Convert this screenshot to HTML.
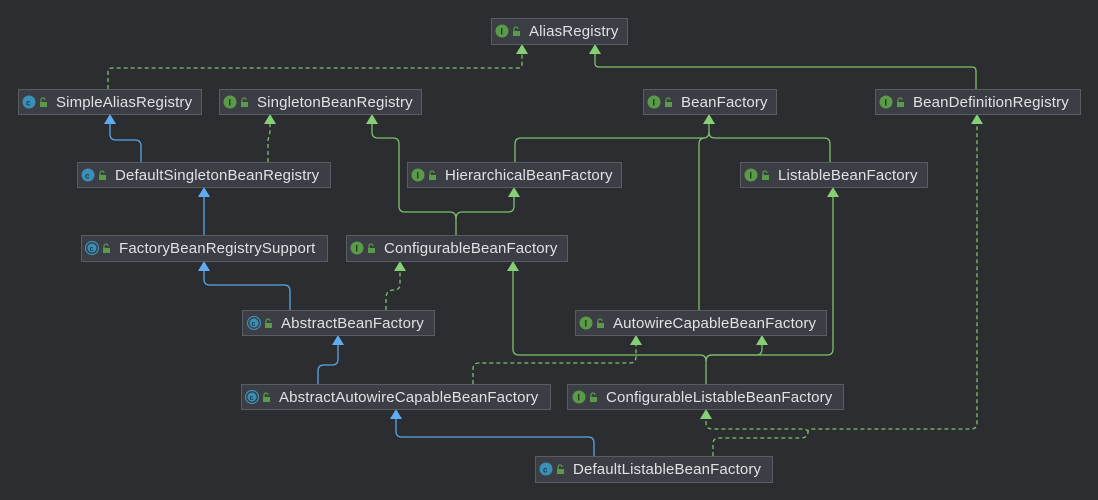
<!DOCTYPE html>
<html><head><meta charset="utf-8"><style>
html,body{margin:0;padding:0;background:#2b2d31;}
svg{display:block}
text{font-family:"Liberation Sans",sans-serif;font-size:15px;fill:#dfe1e5;letter-spacing:0.15px}
.b{fill:#3b3e44;stroke:#595c63;stroke-width:1}
.g{fill:none;stroke:#7cc16a;stroke-width:1.3}
.gd{fill:none;stroke:#7cc16a;stroke-width:1.3;stroke-dasharray:4 3}
.bl{fill:none;stroke:#5aa4e6;stroke-width:1.3}
.ag{fill:#86cf74}.ab{fill:#5fadf0}
</style></head><body>
<svg width="1098" height="500" viewBox="0 0 1098 500">
<defs>
<g id="ic"><circle cx="0" cy="0" r="6.5" fill="#5a9a48"/><text x="-1.5" y="3.5" style="font-size:9px;fill:#1e3a16;font-weight:bold">I</text></g>
<g id="cc"><circle cx="0" cy="0" r="6.5" fill="#3a90b8"/><text x="-3" y="3.5" style="font-size:8px;fill:#1a3a4a;font-weight:bold">c</text></g>
<g id="ac"><circle cx="0" cy="0" r="6.5" fill="none" stroke="#3a90b8" stroke-width="1.2"/><circle cx="0" cy="0" r="4.5" fill="#3a90b8"/><text x="-2.5" y="3" style="font-size:7px;fill:#1a3a4a;font-weight:bold">c</text></g>
<g id="lk"><rect x="-3" y="-1" width="7" height="5" fill="#5a9a48"/><path d="M-2 -1 v-2 a2 2 0 0 1 4 0" fill="none" stroke="#5a9a48" stroke-width="1.2"/></g>
</defs>

<path class="gd" d="M108 89 V72 Q108 68 112 68 H518 Q522 68 522 64 V50"/>
<path class="g" d="M976 89 V71 Q976 67 972 67 H599 Q595 67 595 63 V50"/>
<path class="bl" d="M141 162 V146 Q141 140 135 140 H116 Q110 140 110 134 V120"/>
<path class="gd" d="M268 162 V140 L270 132 V120"/>
<path class="bl" d="M204 235 V193"/>
<path class="bl" d="M290 310 V291 Q290 285 284 285 H210 Q204 285 204 279 V267"/>
<path class="gd" d="M386 310 V298 Q386 290 394 290 Q400 290 400 284 V267"/>
<path class="g" d="M456 235 V219 Q456 212 450 212 H405 Q399 212 399 206 V144 Q399 138 393 138 H378 Q372 138 372 132 V120"/>
<path class="g" d="M456 219 Q456 212 462 212 H508 Q514 212 514 206 V193"/>
<path class="g" d="M515 162 V144 Q515 138 521 138 H703 Q709 138 709 132 V120"/>
<path class="g" d="M830 162 V144 Q830 138 824 138 H715 Q709 138 709 132"/>
<path class="g" d="M699 310 V144 Q699 138 705 138"/>
<path class="bl" d="M318 384 V371 Q318 365 324 365 H332 Q338 365 338 359 V341"/>
<path class="gd" d="M473 384 V369 Q473 363 479 363 H630 Q636 363 636 357 V341"/>
<path class="g" d="M706 384 V361 Q706 355 700 355 H519 Q513 355 513 349 V267"/>
<path class="g" d="M706 361 Q706 355 712 355 H756 Q762 355 762 349 V341"/>
<path class="g" d="M706 361 Q706 355 712 355 H827 Q833 355 833 349 V193"/>
<path class="bl" d="M594 456 V443 Q594 437 588 437 H402 Q396 437 396 431 V415"/>
<path class="gd" d="M713 456 V444 Q713 438 719 438 H800 Q808 438 808 432 Q808 429 812 429 H971 Q977 429 977 423 V120"/>
<path class="gd" d="M808 432 Q808 429 802 429 H712 Q706 429 706 423 V415"/>

<g class="ag">
<path d="M522 44 l-6 10 h12z"/><path d="M595 44 l-6 10 h12z"/>
<path d="M270 114 l-6 10 h12z"/><path d="M372 114 l-6 10 h12z"/>
<path d="M709 114 l-6 10 h12z"/><path d="M977 114 l-6 10 h12z"/>
<path d="M514 187 l-6 10 h12z"/><path d="M833 187 l-6 10 h12z"/>
<path d="M400 261 l-6 10 h12z"/><path d="M513 261 l-6 10 h12z"/>
<path d="M636 335 l-6 10 h12z"/><path d="M762 335 l-6 10 h12z"/>
<path d="M706 409 l-6 10 h12z"/>
</g>
<g class="ab">
<path d="M110 114 l-6 10 h12z"/><path d="M204 187 l-6 10 h12z"/>
<path d="M204 261 l-6 10 h12z"/><path d="M338 335 l-6 10 h12z"/>
<path d="M396 409 l-6 10 h12z"/>
</g>

<g>
<rect class="b" x="491.5" y="18.5" width="136" height="26"/><use href="#ic" x="502" y="31"/><use href="#lk" x="516" y="32"/><text x="529" y="36">AliasRegistry</text>
<rect class="b" x="18.5" y="89.5" width="183" height="25"/><use href="#cc" x="29" y="102"/><use href="#lk" x="43" y="103"/><text x="56" y="107">SimpleAliasRegistry</text>
<rect class="b" x="219.5" y="89.5" width="202" height="25"/><use href="#ic" x="230" y="102"/><use href="#lk" x="244" y="103"/><text x="257" y="107">SingletonBeanRegistry</text>
<rect class="b" x="643.5" y="89.5" width="133" height="25"/><use href="#ic" x="654" y="102"/><use href="#lk" x="668" y="103"/><text x="681" y="107">BeanFactory</text>
<rect class="b" x="875.5" y="89.5" width="205" height="25"/><use href="#ic" x="886" y="102"/><use href="#lk" x="900" y="103"/><text x="913" y="107">BeanDefinitionRegistry</text>
<rect class="b" x="77.5" y="162.5" width="253" height="25"/><use href="#cc" x="88" y="175"/><use href="#lk" x="102" y="176"/><text x="115" y="180">DefaultSingletonBeanRegistry</text>
<rect class="b" x="407.5" y="162.5" width="214" height="25"/><use href="#ic" x="418" y="175"/><use href="#lk" x="432" y="176"/><text x="445" y="180">HierarchicalBeanFactory</text>
<rect class="b" x="740.5" y="162.5" width="187" height="25"/><use href="#ic" x="751" y="175"/><use href="#lk" x="765" y="176"/><text x="778" y="180">ListableBeanFactory</text>
<rect class="b" x="81.5" y="235.5" width="246" height="26"/><use href="#ac" x="92" y="248"/><use href="#lk" x="106" y="249"/><text x="119" y="253">FactoryBeanRegistrySupport</text>
<rect class="b" x="346.5" y="235.5" width="221" height="26"/><use href="#ic" x="357" y="248"/><use href="#lk" x="371" y="249"/><text x="384" y="253">ConfigurableBeanFactory</text>
<rect class="b" x="242.5" y="310.5" width="192" height="25"/><use href="#ac" x="254" y="323"/><use href="#lk" x="268" y="324"/><text x="281" y="328">AbstractBeanFactory</text>
<rect class="b" x="575.5" y="310.5" width="251" height="25"/><use href="#ic" x="586" y="323"/><use href="#lk" x="600" y="324"/><text x="613" y="328">AutowireCapableBeanFactory</text>
<rect class="b" x="241.5" y="384.5" width="309" height="25"/><use href="#ac" x="252" y="397"/><use href="#lk" x="266" y="398"/><text x="279" y="402">AbstractAutowireCapableBeanFactory</text>
<rect class="b" x="567.5" y="384.5" width="276" height="25"/><use href="#ic" x="579" y="397"/><use href="#lk" x="593" y="398"/><text x="606" y="402">ConfigurableListableBeanFactory</text>
<rect class="b" x="535.5" y="456.5" width="237" height="26"/><use href="#cc" x="546" y="469"/><use href="#lk" x="560" y="470"/><text x="573" y="474">DefaultListableBeanFactory</text>
</g>
</svg>
</body></html>
